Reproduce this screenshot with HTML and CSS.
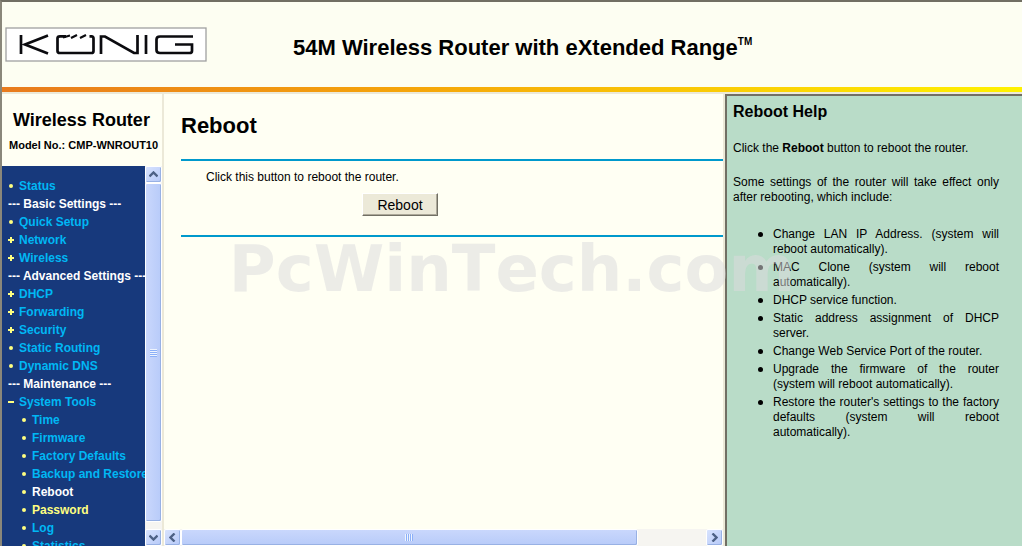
FILE: index.html
```html
<!DOCTYPE html>
<html lang="en">
<head>
  <meta charset="UTF-8">
  <meta name="viewport" content="width=device-width, initial-scale=1.0">
  <title>Wireless Router</title>
  <link rel="stylesheet" href="styles.css">
</head>
<body>

  <header class="banner">
    <svg class="logo" width="202" height="35" viewBox="0 0 202 35" role="img" aria-label="König">
      <rect x="1" y="1" width="200" height="33" fill="#fff" stroke="#a0a0a0" stroke-width="1.3"/>
      <g fill="none" stroke="#0b0b0f" stroke-width="2.700">
        <path d="M16 8v19"/>
        <path d="M43 8.500L20 17.500L43 26.500"/>
        <path d="M61 9.300h-6q-2.500 0-2.500 2v12.700q0 2 2.500 2h31.500q2 0 2-2V11.500q0-2.200-2-2.200h-2"/>
        <path d="M58 10.500l7-2M66 11l6-3M75 11l6-3" stroke-width="2.200"/>
        <path d="M96 27V9.500h4L129 26h3.500V8"/>
        <path d="M141 8v19"/>
        <path d="M188 9.500h-33q-3.500 0-3.500 3v10.500q0 3 3.500 3h29.500q2.500 0 2.500-2v-6.500h-17"/>
      </g>
    </svg>
    <div class="product">54M Wireless Router with eXtended Range<sup>TM</sup></div>
  </header>

  <div class="frames">
    <aside class="sidebar">
      <div class="model">
        <h2>Wireless Router</h2>
        <p>Model No.: CMP-WNROUT10</p>
      </div>
      <div class="menu-frame">
        <nav class="menu">
          <ul>
            <li class="dot"><a href="#">Status</a></li>
            <li class="group">--- Basic Settings ---</li>
            <li class="dot"><a href="#">Quick Setup</a></li>
            <li class="plus"><a href="#">Network</a></li>
            <li class="plus"><a href="#">Wireless</a></li>
            <li class="group">--- Advanced Settings ---</li>
            <li class="plus"><a href="#">DHCP</a></li>
            <li class="plus"><a href="#">Forwarding</a></li>
            <li class="plus"><a href="#">Security</a></li>
            <li class="dot"><a href="#">Static Routing</a></li>
            <li class="dot"><a href="#">Dynamic DNS</a></li>
            <li class="group">--- Maintenance ---</li>
            <li class="minus"><a href="#">System Tools</a></li>
            <li class="dot sub"><a href="#">Time</a></li>
            <li class="dot sub"><a href="#">Firmware</a></li>
            <li class="dot sub"><a href="#">Factory Defaults</a></li>
            <li class="dot sub"><a href="#">Backup and Restore</a></li>
            <li class="dot sub"><a href="#" class="current">Reboot</a></li>
            <li class="dot sub"><a href="#" class="hover">Password</a></li>
            <li class="dot sub"><a href="#">Log</a></li>
            <li class="dot sub"><a href="#">Statistics</a></li>
          </ul>
        </nav>
        <div class="scroll vertical">
          <button type="button" aria-label="Scroll up"><svg width="9" height="7" viewBox="0 0 9 7"><path d="M0.500 5.500L4.500 1.500L8.500 5.500"/></svg></button>
          <div class="track"><div class="thumb"><span class="grip"></span></div></div>
          <button type="button" aria-label="Scroll down"><svg width="9" height="7" viewBox="0 0 9 7"><path d="M0.500 1.500L4.500 5.500L8.500 1.500"/></svg></button>
        </div>
      </div>
    </aside>

    <main class="content">
      <div class="page">
        <h1>Reboot</h1>
        <form class="panel" onsubmit="return false">
          <p>Click this button to reboot the router.</p>
          <button type="submit" class="btn">Reboot</button>
        </form>
      </div>
      <div class="scroll horizontal">
        <button type="button" aria-label="Scroll left"><svg width="7" height="9" viewBox="0 0 7 9"><path d="M5.500 0.500L1.500 4.500L5.500 8.500"/></svg></button>
        <div class="track"><div class="thumb"><span class="grip"></span></div></div>
        <button type="button" aria-label="Scroll right"><svg width="7" height="9" viewBox="0 0 7 9"><path d="M1.500 0.500L5.500 4.500L1.500 8.500"/></svg></button>
      </div>
    </main>

    <aside class="help">
      <h3>Reboot Help</h3>
      <p>Click the <b>Reboot</b> button to reboot the router.</p>
      <p>Some settings of the router will take effect only after rebooting, which include:</p>
      <ul>
        <li>Change LAN IP Address. (system will reboot automatically).</li>
        <li>MAC Clone (system will reboot automatically).</li>
        <li>DHCP service function.</li>
        <li>Static address assignment of DHCP server.</li>
        <li>Change Web Service Port of the router.</li>
        <li>Upgrade the firmware of the router (system will reboot automatically).</li>
        <li><span class="full">Restore the router's settings to the factory defaults (system will reboot</span> automatically).</li>
      </ul>
    </aside>
  </div>

  <div class="watermark">PcWinTech.com</div>

</body>
</html>
```
FILE: styles.css
```css
* {
  box-sizing: border-box;
}
body {
  margin: 0;
  height: 100vh;
  display: flex;
  flex-direction: column;
  overflow: hidden;
  position: relative;
  border-left: 2px solid #8a877a;
  border-top: 2px solid #716f64;
  background: #fffff3;
  color: #000;
  font-family: "Liberation Sans", Arial, sans-serif;
  font-size: 12px;
  line-height: 15px;
}
h1, h2, h3, p, ul {
  margin: 0;
  padding: 0;
}
ul {
  list-style: none;
}

/* top banner */
.banner {
  flex: none;
  display: flex;
  align-items: center;
  height: 90px;
  padding: 0 3px 5px;
  background: linear-gradient(to right, #e87b1e, #f5a50a 40%, #fff200) bottom / 100% 5px no-repeat, #fdfef2;
}
.logo {
  flex: none;
}
.product {
  margin-left: 86px;
  padding-top: 7px;
  font-size: 22px;
  font-weight: bold;
  line-height: 26px;
  white-space: nowrap;
}
.product sup {
  font-size: 10px;
  line-height: 10px;
  vertical-align: 10px;
}

.frames {
  flex: 1;
  display: flex;
  min-height: 0;
  border-top: 2px solid #ece9d8;
}

/* left column */
.sidebar {
  flex: none;
  display: flex;
  flex-direction: column;
  width: 162px;
  border-right: 2px solid #ece9d8;
}
.model {
  flex: none;
  height: 72px;
  padding: 15px 0 0 7px;
  white-space: nowrap;
}
.model h2 {
  padding-left: 4px;
  font-size: 18px;
  line-height: 22px;
}
.model p {
  margin-top: 7px;
  font-size: 11px;
  font-weight: bold;
}
.menu-frame {
  flex: 1;
  display: flex;
  min-height: 0;
}
.menu {
  flex: 1;
  min-width: 0;
  overflow: hidden;
  padding: 11px 0 0 6px;
  background: #17397c;
  font-weight: bold;
  line-height: 18px;
  white-space: nowrap;
}
.menu li {
  display: flex;
  align-items: center;
  height: 18px;
}
.menu li::before {
  flex: none;
  margin-right: 5px;
}
.menu .sub {
  padding-left: 13px;
}
.menu .dot::before {
  content: "";
  width: 4px;
  height: 4px;
  margin-left: 1px;
  margin-right: 6px;
  border-radius: 50%;
  background: #ffff80;
}
.menu .plus::before,
.menu .minus::before {
  content: "";
  width: 6px;
  height: 6px;
  background: linear-gradient(#ffff80, #ffff80) center / 6px 2px no-repeat;
}
.menu .plus::before {
  background: linear-gradient(#ffff80, #ffff80) center / 6px 2px no-repeat,
    linear-gradient(#ffff80, #ffff80) center / 2px 6px no-repeat;
}
.menu a {
  color: #00b7f4;
  text-decoration: none;
}
.menu a.current,
.menu .group {
  color: #fff;
}
.menu a.hover {
  color: #ffff80;
}

/* scroll bars */
.scroll {
  flex: none;
  display: flex;
  background: #f6f5f1;
}
.vertical {
  flex-direction: column;
  width: 17px;
}
.horizontal {
  height: 17px;
}
.scroll button,
.thumb {
  display: flex;
  align-items: center;
  justify-content: center;
  border: 1px solid #fff;
  border-radius: 2px;
  background: linear-gradient(135deg, #d8e3fe, #b6c9f8);
  box-shadow: inset -1px -1px #98b1e4;
}
.scroll button {
  flex: none;
  width: 17px;
  height: 17px;
  padding: 0;
}
.scroll svg {
  fill: none;
  stroke: #4d6185;
  stroke-width: 2.4;
}
.track {
  flex: 1;
  min-width: 0;
  min-height: 0;
}
.vertical .thumb {
  height: 98%;
  background: linear-gradient(to right, #c9d7fc, #b8cbf9);
}
.horizontal .thumb {
  width: 87%;
  height: 100%;
  background: linear-gradient(#c9d7fc, #b8cbf9);
}
.grip {
  width: 7px;
  height: 8px;
  background: repeating-linear-gradient(#eef4fe 0 1px, #8cb0f8 1px 2px);
}
.horizontal .grip {
  width: 8px;
  height: 7px;
  background: repeating-linear-gradient(to right, #eef4fe 0 1px, #8cb0f8 1px 2px);
}

/* reboot page */
.content {
  flex: 1;
  display: flex;
  flex-direction: column;
  min-width: 0;
}
.page {
  flex: 1;
  min-height: 0;
  padding: 19px 0 0 17px;
}
.page h1 {
  font-size: 22px;
  line-height: 26px;
}
.panel {
  display: flex;
  flex-direction: column;
  margin-top: 20px;
  padding: 9px 0 19px 25px;
  border-top: 2px solid #0099cc;
  border-bottom: 2px solid #0099cc;
}
.btn {
  width: 76px;
  height: 23px;
  margin: 8px 0 0 156px;
  padding: 0;
  border: 1px solid;
  border-color: #fff #716f64 #716f64 #fff;
  box-shadow: inset -1px -1px #aca899;
  background: #ece9d8;
  color: #000;
  font-family: inherit;
  font-size: 14px;
}

/* help column */
.help {
  flex: none;
  width: 297px;
  margin-left: 2px;
  padding: 6px 23px 0 6px;
  border-left: 2px solid #716f64;
  border-top: 2px solid #716f64;
  outline: 2px solid #ece9d8;
  background: #b9dcc8;
  text-align: justify;
}
.help h3 {
  margin-bottom: 19px;
  font-size: 16px;
  line-height: 20px;
}
.help p {
  margin-bottom: 19px;
}
.help ul {
  margin-top: 22px;
  padding-left: 40px;
}
.help li {
  position: relative;
  margin-bottom: 3px;
}
.help li::before {
  content: "";
  position: absolute;
  left: -15px;
  top: 5px;
  width: 5px;
  height: 5px;
  border-radius: 50%;
  background: #000;
}
.help .full {
  display: block;
  text-align-last: justify;
}

/* stamp over the whole page */
.watermark {
  position: absolute;
  left: 0;
  right: 0;
  top: 230px;
  text-align: center;
  color: rgba(219, 219, 221, 0.53);
  font-family: "DejaVu Sans", sans-serif;
  font-size: 64px;
  font-weight: bold;
  font-kerning: none;
  line-height: 75px;
  pointer-events: none;
}
```
